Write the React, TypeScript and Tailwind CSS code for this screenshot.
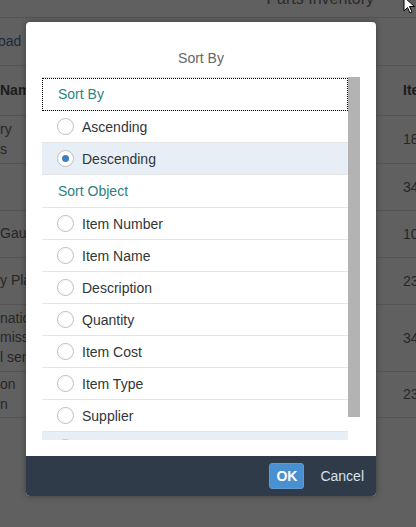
import React from "react";

function Radio({ checked }: { checked?: boolean }) {
  return (
    <span className="w-[17px] h-[17px] rounded-full border-[1.5px] border-[#bdbdbd] bg-white flex items-center justify-center shrink-0">
      {checked && <span className="w-[7px] h-[7px] rounded-full bg-[#3f7ec0]" />}
    </span>
  );
}

function OptionRow({ label, checked, highlight }: { label: string; checked?: boolean; highlight?: boolean }) {
  return (
    <div
      className={`h-[32px] shrink-0 flex items-center pl-[15px] gap-[8px] border-b border-[#e5e5e5] ${
        highlight ? "bg-[#e8eef6]" : "bg-white"
      }`}
    >
      <Radio checked={checked} />
      <span className="text-[14px] text-[#32363a] leading-none">{label}</span>
    </div>
  );
}

function GroupHeader({ label, focused }: { label: string; focused?: boolean }) {
  return (
    <div
      className={`h-[33px] shrink-0 flex items-center pl-[16px] border-b border-[#e5e5e5] ${
        focused ? "outline-1 outline-dotted outline-black -outline-offset-1" : ""
      }`}
    >
      <span className="text-[14px] text-[#2b8380] leading-none">{label}</span>
    </div>
  );
}

export default function App() {
  const items = ["Item Number", "Item Name", "Description", "Quantity", "Item Cost", "Item Type", "Supplier"];
  const rows: { left: string[]; right: string; h: string }[] = [
    { left: ["ry", "s"], right: "18", h: "h-[48px]" },
    { left: [], right: "34", h: "h-[47px]" },
    { left: ["Gauge"], right: "10", h: "h-[47px]" },
    { left: ["y Plate"], right: "23", h: "h-[47px]" },
    { left: ["natic", "missi", "l sen"], right: "34", h: "h-[67px]" },
    { left: ["on", "n"], right: "23", h: "h-[46px]" },
  ];

  return (
    <div className="relative w-[416px] h-[527px] overflow-hidden bg-[#606060] font-['Liberation_Sans',Arial,sans-serif] text-[#1f1f1f]">
      {/* background page */}
      <div className="h-[18px] border-b border-[#545454] flex justify-end pr-[42px]">
        <span className="text-[16px] leading-[16px] -mt-[9px] text-[#2a2a2a]">Parts Inventory</span>
      </div>
      <div className="h-[48px] border-b border-[#545454] flex items-center">
        <span className="text-[14px] text-[#1c2b3c] -ml-[41px]">Download</span>
      </div>
      <div className="h-[50px] border-b border-[#545454] flex items-center justify-between">
        <span className="text-[14px] font-bold text-[#1c1c1c]">Name</span>
        <span className="text-[14px] font-bold text-[#1c1c1c] w-[13px] overflow-hidden whitespace-nowrap">Item</span>
      </div>
      {rows.map((r, i) => (
        <div key={i} className={`${r.h} border-b border-[#545454] flex items-center justify-between`}>
          <div className="flex flex-col text-[14px] leading-[19.5px] text-[#262626]">
            {r.left.map((t, j) => (
              <span key={j} className="whitespace-nowrap">{t}</span>
            ))}
          </div>
          <span className="text-[14px] text-[#262626] w-[13px] overflow-hidden whitespace-nowrap">{r.right}</span>
        </div>
      ))}

      {/* dialog */}
      <div className="absolute left-[26px] top-[22px] w-[350px] h-[474px] bg-white rounded-[4px] shadow-[0_0_6px_rgba(0,0,0,0.35)] flex flex-col overflow-hidden">
        <div className="h-[55px] shrink-0 flex justify-center pt-[27px]">
          <span className="text-[14px] leading-[18px] text-[#666666]">Sort By</span>
        </div>
        <div className="flex-1 flex px-[16px]">
          <div className="w-[306px] h-[363px] overflow-hidden flex flex-col border-t border-[#e5e5e5]">
            <GroupHeader label="Sort By" focused />
            <OptionRow label="Ascending" />
            <OptionRow label="Descending" checked highlight />
            <GroupHeader label="Sort Object" />
            {items.map((it) => (
              <OptionRow key={it} label={it} />
            ))}
            <OptionRow label="Item Status" highlight />
          </div>
          <div className="w-[12px] h-[340px] bg-[#b3b3b3]" />
        </div>
        <div className="h-[40px] shrink-0 bg-[#2f3b49] flex items-center justify-end pr-[12px] gap-[16px]">
          <button className="w-[35px] h-[26px] rounded-[3px] bg-[#4a8fd0] border border-[#5a9bd6] text-white text-[14px] font-bold flex items-center justify-center">
            OK
          </button>
          <span className="text-[14px] text-[#d6e1ec]">Cancel</span>
        </div>
      </div>

      {/* cursor */}
      <svg className="absolute left-[403px] -top-[4px]" width="14" height="18" viewBox="0 0 14 18">
        <path d="M1 1 L1 15 L4.5 11.5 L7 17 L9 16 L6.5 10.5 L11.5 10.5 Z" fill="white" stroke="black" strokeWidth="1" />
      </svg>
    </div>
  );
}
